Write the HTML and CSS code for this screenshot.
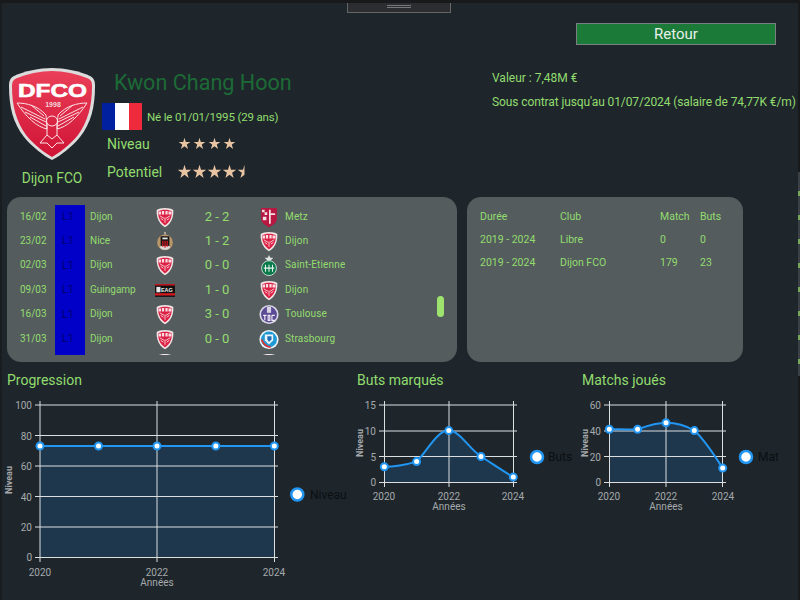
FILE: index.html
```html
<!DOCTYPE HTML>
<html lang="fr">
<head>
	<meta charset="UTF-8">
	<title>Kwon Chang Hoon</title>
	<link rel="stylesheet" href="styles.css">
</head>
<body>
	<!-- Shared crests and stars -->
	<svg class="sprites" aria-hidden="true">
		<symbol id="star" viewBox="0 0 20 20">
			<polygon points="10,1 12,7.5 19,7.5 13.5,11.5 15.5,18.5 10,14.2 4.5,18.5 6.5,11.5 1,7.5 8,7.5" />
		</symbol>
		<symbol id="star-half" viewBox="0 0 20 20">
			<polygon points="10,1 8,7.5 1,7.5 6.5,11.5 4.5,18.5 10,14.2" />
		</symbol>
		<symbol id="dijon" viewBox="0 0 22 24">
			<path fill="#f2e6e8" d="M11 1 C7 1 3 2 1.5 3.5 C1 9 2.5 15 6 19 C8 21 10 22.5 11 23 C12 22.5 14 21 16 19 C19.5 15 21 9 20.5 3.5 C19 2 15 1 11 1 Z" />
			<path fill="#dc2044" d="M11 3 C8 3 4.5 3.6 3 5 C3 10 4.5 14.5 7 17.5 C8.5 19.2 10 20.5 11 21 C12 20.5 13.5 19.2 15 17.5 C17.5 14.5 19 10 19 5 C17.5 3.6 14 3 11 3 Z" />
			<path fill="#fbdfe4" d="M3.5 5 H6.5 V8.5 H3.5 Z M7.5 4.5 H10 V8.5 H7.5 Z M11.5 4.5 H14 V8.5 H11.5 Z M15 5 H18.5 V8.5 H15 Z" />
			<path fill="none" stroke="#fbdfe4" stroke-width="1" d="M5 10 L10 13 M17 10 L12 13 M11 12 V18 M6 13 L9 15 M16 13 L13 15" />
		</symbol>
		<symbol id="nice" viewBox="0 0 22 24">
			<circle cx="11" cy="13" r="9" fill="#b9956a" />
			<path fill="#d8dcdc" d="M5 19 Q11 24 17 19 L15 16 H7 Z" />
			<rect x="10" y="1" width="2" height="3" fill="#b9b2a4" />
			<rect x="6" y="6" width="10" height="11" fill="#151515" />
			<path stroke="#d71920" stroke-width="1.4" d="M8.5 11 V18 M11 11 V19 M13.5 11 V18" />
			<rect x="8" y="7.5" width="6" height="2" fill="#e8e8e8" />
		</symbol>
		<symbol id="metz" viewBox="0 0 22 24">
			<path fill="#b71740" d="M2 1 H20 V13 C20 18 15 21 11 23 C7 21 2 18 2 13 Z" />
			<path fill="#f3dfe4" d="M11 3 H13 V7 H18 V9 H13 V19 H11 Z M3 3 H6 V6 H3 Z M6 6 H9 V9 H6 Z M4 11 H8 V15 H4 Z" />
		</symbol>
		<symbol id="saint-etienne" viewBox="0 0 22 24">
			<polygon fill="#dfe6e4" points="11,0 12.5,3 16,3 13,6 11,8 9,6 6,3 9.5,3" />
			<circle cx="11" cy="15" r="8.5" fill="#0a7a4a" />
			<circle cx="11" cy="15" r="8.5" fill="none" stroke="#d8e4de" stroke-width="1" />
			<path stroke="#e8f2ec" stroke-width="1.2" d="M7 11 V19 M11 11 V19 M15 11 V19 M5 15 H17" />
		</symbol>
		<symbol id="toulouse" viewBox="0 0 24 24">
			<circle cx="12" cy="12" r="11.5" fill="#d9d6e6" />
			<circle cx="12" cy="12" r="9.5" fill="#5b4a94" />
			<rect x="9.5" y="3" width="5" height="7" fill="#d8d4e6" />
			<path stroke="#f0eef6" stroke-width="1.4" fill="none" d="M5 13 H9 M7 13 V19 M11 13 V19 H13 V13 Z M15.5 13 H19 M15.5 13 V19 H19" />
		</symbol>
		<symbol id="strasbourg" viewBox="0 0 24 24">
			<circle cx="12" cy="12" r="11.5" fill="#eef5fa" />
			<circle cx="12" cy="12" r="9.5" fill="#1f9ad6" />
			<path fill="#eef5fa" d="M7 6 H17 V13 L12 18 L7 13 Z" />
			<path stroke="#e2322f" stroke-width="2.2" fill="none" d="M3 12 C5 17 9 21 14 21" />
			<path fill="#1c6fb5" d="M10 8 H15 V12 L12 15 L10 12 Z" />
		</symbol>
	</svg>

	<div class="window">
		<div class="grip"><span></span></div>
		<div class="edge"><div class="edge-ticks"></div></div>

		<header class="head">
			<div class="club">
				<svg class="crest" viewBox="0 0 100 110" role="img" aria-label="Dijon FCO">
					<defs>
						<linearGradient id="crest-red" x1="0" y1="0" x2="0" y2="1">
							<stop offset="0" stop-color="#ea3f58" />
							<stop offset="1" stop-color="#d01336" />
						</linearGradient>
					</defs>
					<path fill="#dcdcdc" d="M52 9 C40 9 24 12 14 17 C10 19 9 22 9 27 C9 48 13 64 24 78 C32 88 44 97 52 101 C60 97 72 88 80 78 C91 64 95 48 95 27 C95 22 94 19 90 17 C80 12 64 9 52 9 Z" />
					<path fill="url(#crest-red)" d="M52 12 C41 12 26 15 16 19.5 C13 21 12 23 12 27 C12 47 16 62 26 76 C34 86 45 94 52 98 C59 94 70 86 78 76 C88 62 92 47 92 27 C92 23 91 21 88 19.5 C78 15 63 12 52 12 Z" />
					<text class="crest-name" x="18" y="37.5" textLength="69" lengthAdjust="spacingAndGlyphs">DFCO</text>
					<text class="crest-year" x="53" y="47.5">1998</text>
					<g class="crest-owl">
						<path d="M17 44 C27 44 38 47 46 56 L47 70 C37 68 26 58 17 44 Z" />
						<path d="M21 48 L45 60 M25 53 L46 63 M30 58 L46 67 M31 46 L44 57" />
						<path d="M87 44 C77 44 66 47 58 56 L57 70 C67 68 78 58 87 44 Z" />
						<path d="M83 48 L59 60 M79 53 L58 63 M74 58 L58 67 M73 46 L60 57" />
						<ellipse cx="52" cy="62" rx="5.5" ry="5" />
						<path d="M47 65 L47 76 L52 80 L57 76 L57 65" />
						<path d="M47 76 L40 84 L47 84 L52 89 L57 84 L64 84 L57 76" />
					</g>
				</svg>
				<p class="club-name">Dijon FCO</p>
			</div>

			<div class="identity">
				<h1 class="player-name">Kwon Chang Hoon</h1>
				<div class="birth">
					<div class="flag"><span class="flag-blue"></span><span class="flag-white"></span><span class="flag-red"></span></div>
					<span>Né le 01/01/1995 (29 ans)</span>
				</div>
				<div class="rating">
					<span class="rating-label">Niveau</span>
					<div class="stars">
						<svg class="star"><use href="#star" /></svg>
						<svg class="star"><use href="#star" /></svg>
						<svg class="star"><use href="#star" /></svg>
						<svg class="star"><use href="#star" /></svg>
					</div>
				</div>
				<div class="rating rating-big">
					<span class="rating-label">Potentiel</span>
					<div class="stars">
						<svg class="star"><use href="#star" /></svg>
						<svg class="star"><use href="#star" /></svg>
						<svg class="star"><use href="#star" /></svg>
						<svg class="star"><use href="#star" /></svg>
						<svg class="star"><use href="#star-half" /></svg>
					</div>
				</div>
			</div>

			<div class="facts">
				<a class="back" href="#">Retour</a>
				<p class="fact">Valeur : 7,48M €</p>
				<p class="fact fact-long">Sous contrat jusqu'au 01/07/2024 (salaire de 74,77K €/m)</p>
			</div>
		</header>

		<section class="panels">
			<div class="panel panel-matches">
				<div class="matches">
					<div class="match">
						<span>16/02</span><span class="league">L1</span><span class="team">Dijon</span>
						<svg class="logo"><use href="#dijon" /></svg>
						<span class="score">2 - 2</span>
						<svg class="logo"><use href="#metz" /></svg>
						<span class="team-away">Metz</span>
					</div>
					<div class="match">
						<span>23/02</span><span class="league">L1</span><span class="team">Nice</span>
						<svg class="logo"><use href="#nice" /></svg>
						<span class="score">1 - 2</span>
						<svg class="logo"><use href="#dijon" /></svg>
						<span class="team-away">Dijon</span>
					</div>
					<div class="match">
						<span>02/03</span><span class="league">L1</span><span class="team">Dijon</span>
						<svg class="logo"><use href="#dijon" /></svg>
						<span class="score">0 - 0</span>
						<svg class="logo"><use href="#saint-etienne" /></svg>
						<span class="team-away">Saint-Etienne</span>
					</div>
					<div class="match">
						<span>09/03</span><span class="league">L1</span><span class="team">Guingamp</span>
						<svg class="logo" viewBox="0 0 22 14">
							<rect width="22" height="14" fill="#111" />
							<rect y="10" width="22" height="2.5" fill="#d71920" />
							<rect width="22" height="1.5" fill="#d71920" />
							<rect x="1.5" y="3" width="4.5" height="6" fill="#e6e6e6" />
							<text class="logo-text" x="6.5" y="9">EAG</text>
						</svg>
						<span class="score">1 - 0</span>
						<svg class="logo"><use href="#dijon" /></svg>
						<span class="team-away">Dijon</span>
					</div>
					<div class="match">
						<span>16/03</span><span class="league">L1</span><span class="team">Dijon</span>
						<svg class="logo"><use href="#dijon" /></svg>
						<span class="score">3 - 0</span>
						<svg class="logo"><use href="#toulouse" /></svg>
						<span class="team-away">Toulouse</span>
					</div>
					<div class="match">
						<span>31/03</span><span class="league">L1</span><span class="team">Dijon</span>
						<svg class="logo"><use href="#dijon" /></svg>
						<span class="score">0 - 0</span>
						<svg class="logo"><use href="#strasbourg" /></svg>
						<span class="team-away">Strasbourg</span>
					</div>
					<div class="match">
						<span></span><span class="league"></span><span class="team"></span>
						<svg class="logo"><use href="#dijon" /></svg>
						<span class="score"></span>
						<svg class="logo"><use href="#dijon" /></svg>
						<span class="team-away"></span>
					</div>
				</div>
				<div class="scroll-thumb"></div>
			</div>

			<div class="panel panel-career">
				<div class="career">
					<span>Durée</span><span>Club</span><span>Match</span><span>Buts</span>
					<span>2019 - 2024</span><span>Libre</span><span>0</span><span>0</span>
					<span>2019 - 2024</span><span>Dijon FCO</span><span>179</span><span>23</span>
				</div>
			</div>
		</section>

		<section class="charts">
			<div class="chart chart-level">
				<h2>Progression</h2>
				<svg viewBox="2 395 348 205" width="348" height="205">
					<path class="area" d="M40 446 H274.3 V557.3 H40 Z" />
					<path class="grid" d="M35 405 H278 M35 435.5 H278 M35 466 H278 M35 496.5 H278 M35 527 H278 M35 557.5 H278 M40 401 V562 M157 401 V562 M274.5 401 V562" />
					<path class="line" d="M40 446 H274.3" />
					<g class="dots">
						<circle cx="40" cy="446" r="3.5" /><circle cx="98.5" cy="446" r="3.5" /><circle cx="157" cy="446" r="3.5" /><circle cx="215.8" cy="446" r="3.5" /><circle cx="274.3" cy="446" r="3.5" />
					</g>
					<g class="ticks-y">
						<text x="32" y="409">100</text><text x="32" y="439.5">80</text><text x="32" y="470">60</text><text x="32" y="500.5">40</text><text x="32" y="531">20</text><text x="32" y="561">0</text>
					</g>
					<g class="ticks-x">
						<text x="40" y="576">2020</text><text x="157" y="576">2022</text><text x="274" y="576">2024</text>
					</g>
					<text class="axis-x" x="157" y="586">Années</text>
					<text class="axis-y" transform="translate(12 480) rotate(-90)">Niveau</text>
					<circle class="legend-dot" cx="297.3" cy="494.5" r="6" />
					<text class="legend" x="310" y="499">Niveau</text>
				</svg>
			</div>

			<div class="chart chart-goals">
				<h2>Buts marqués</h2>
				<svg viewBox="350 395 225 125" width="225" height="125">
					<path class="area" d="M384.3 466.8 C395 466.8 405 465 416.6 461.6 C428 450 437 430.6 448.8 430.6 C460 430.6 469 449 481 456.5 C492 463.5 503 471 513.3 477.1 V482.3 H384.3 Z" />
					<path class="grid" d="M379 405 H517 M379 431 H517 M379 456.5 H517 M379 482.5 H517 M384.5 401 V487 M449 401 V487 M513.5 401 V487" />
					<path class="line" d="M384.3 466.8 C395 466.8 405 465 416.6 461.6 C428 450 437 430.6 448.8 430.6 C460 430.6 469 449 481 456.5 C492 463.5 503 471 513.3 477.1" />
					<g class="dots">
						<circle cx="384.3" cy="466.8" r="3.5" /><circle cx="416.6" cy="461.6" r="3.5" /><circle cx="448.8" cy="430.6" r="3.5" /><circle cx="481" cy="456.5" r="3.5" /><circle cx="513.3" cy="477.1" r="3.5" />
					</g>
					<g class="ticks-y">
						<text x="376" y="409">15</text><text x="376" y="434.5">10</text><text x="376" y="460.5">5</text><text x="376" y="486">0</text>
					</g>
					<g class="ticks-x">
						<text x="384" y="500">2020</text><text x="449" y="500">2022</text><text x="513" y="500">2024</text>
					</g>
					<text class="axis-x" x="449" y="510">Années</text>
					<text class="axis-y" transform="translate(363 443) rotate(-90)">Niveau</text>
					<circle class="legend-dot" cx="537" cy="457" r="6" />
					<text class="legend" x="548" y="461">Buts</text>
				</svg>
			</div>

			<div class="chart chart-games">
				<h2>Matchs joués</h2>
				<svg viewBox="575 395 203 125" width="203" height="125">
					<path class="area" d="M609.3 429.3 C619 429.3 628 429.6 637.6 429.3 C647 426 656 422.8 666 422.8 C676 422.8 685 425 694.3 430.6 C705 440 714 455 722.7 468.1 V482.3 H609.3 Z" />
					<path class="grid" d="M604 405 H726 M604 431 H726 M604 456.5 H726 M604 482.5 H726 M609.5 401 V487 M666 401 V487 M722.5 401 V487" />
					<path class="line" d="M609.3 429.3 C619 429.3 628 429.6 637.6 429.3 C647 426 656 422.8 666 422.8 C676 422.8 685 425 694.3 430.6 C705 440 714 455 722.7 468.1" />
					<g class="dots">
						<circle cx="609.3" cy="429.3" r="3.5" /><circle cx="637.6" cy="429.3" r="3.5" /><circle cx="666" cy="422.8" r="3.5" /><circle cx="694.3" cy="430.6" r="3.5" /><circle cx="722.7" cy="468.1" r="3.5" />
					</g>
					<g class="ticks-y">
						<text x="601" y="409">60</text><text x="601" y="434.5">40</text><text x="601" y="460.5">20</text><text x="601" y="486">0</text>
					</g>
					<g class="ticks-x">
						<text x="609" y="500">2020</text><text x="666" y="500">2022</text><text x="723" y="500">2024</text>
					</g>
					<text class="axis-x" x="666" y="510">Années</text>
					<text class="axis-y" transform="translate(588 443) rotate(-90)">Niveau</text>
					<circle class="legend-dot" cx="746" cy="457" r="6" />
					<text class="legend" x="758" y="461">Matchs</text>
				</svg>
			</div>
		</section>
	</div>
</body>
</html>
```

FILE: styles.css
```css
body, html {
	margin: 0;
	padding: 0;
	background: #1e262c;
	font-family: Roboto, "Liberation Sans", sans-serif;
	color: #92dc6e;
}

p, h1, h2 {
	margin: 0;
	font-weight: normal;
}

.sprites {
	position: absolute;
	width: 0;
	height: 0;
}

.window {
	position: relative;
	box-sizing: border-box;
	width: 800px;
	height: 600px;
	overflow: hidden;
	background: #1e262c;
	border-top: 3px solid #17191b;
	border-left: 2px solid #1a1d20;
}

.grip {
	position: absolute;
	top: -3px;
	left: 345px;
	box-sizing: border-box;
	width: 104px;
	height: 13px;
	background: #2b2d30;
	border: 1px solid #666;
	display: flex;
	align-items: center;
	justify-content: center;
}

.grip span {
	display: block;
	width: 24px;
	height: 1px;
	border-top: 1px solid #777;
	border-bottom: 1px solid #777;
}

.edge {
	position: absolute;
	top: 0;
	bottom: 0;
	right: 0;
	width: 2px;
	background: #17191b;
}

.edge-ticks {
	margin-top: 169px;
	height: 204px;
	background: repeating-linear-gradient(to bottom, #3a4044 0, #3a4044 19px, #76a85c 19px, #76a85c 24px);
}

/* Header */

.head {
	display: flex;
	height: 194px;
}

.club {
	width: 98px;
	padding-top: 56px;
	box-sizing: border-box;
	text-align: center;
}

.crest {
	display: block;
	width: 100px;
	height: 110px;
	margin-left: -2px;
}

.crest-name {
	font: bold 19px "Liberation Sans", sans-serif;
	fill: #fff;
	stroke: #fff;
	stroke-width: .6;
}

.crest-year {
	font: bold 7px "Liberation Sans", sans-serif;
	fill: #f6d4da;
	text-anchor: middle;
}

.crest-owl path, .crest-owl ellipse {
	fill: none;
	stroke: #fbe3e7;
	stroke-width: 1;
}

.logo-text {
	font: bold 6px "Liberation Sans", sans-serif;
	fill: #eee;
}

.club-name {
	margin-top: 1px;
	margin-left: 2px;
	font-size: 13.8px;
}

.identity {
	width: 392px;
	padding-top: 67px;
	box-sizing: border-box;
}

.player-name {
	margin-left: 14px;
	font-size: 21.6px;
	line-height: 26px;
	color: #1c6a35;
}

.birth {
	display: flex;
	align-items: center;
	gap: 5px;
	margin: 7px 0 0 2px;
	font-size: 11.5px;
	letter-spacing: -.15px;
}

.flag {
	display: flex;
	width: 40px;
	height: 27px;
}

.flag span {
	flex: 1;
}

.flag-blue {
	background: #00209f;
}

.flag-white {
	background: #fff;
}

.flag-red {
	background: #ee2a3c;
}

.rating {
	display: flex;
	align-items: center;
	margin: 1px 0 0 7px;
	height: 25px;
	font-size: 14px;
}

.rating-label {
	width: 71px;
}

.stars {
	display: flex;
	gap: 2px;
}

.star {
	width: 13px;
	height: 13px;
	fill: #e8c4a2;
}

.rating-big {
	margin-top: 3px;
}

.rating-big .stars {
	gap: 0;
	margin-left: -1px;
}

.rating-big .star {
	width: 15px;
	height: 15px;
}

.facts {
	flex: 1;
	min-width: 0;
	padding-top: 20px;
	white-space: nowrap;
	font-size: 12px;
}

.back {
	display: block;
	box-sizing: border-box;
	width: 200px;
	height: 22px;
	margin: 0 0 21px 84px;
	background: #1c7a38;
	border: 1px solid #7a7f82;
	color: #e8f0ea;
	font-size: 15px;
	line-height: 20px;
	text-align: center;
	text-decoration: none;
}

.fact {
	height: 24px;
	line-height: 24px;
}

.fact-long {
	letter-spacing: -.1px;
}

/* Panels */

.panels {
	display: flex;
	gap: 10px;
	padding-left: 5px;
}

.panel {
	position: relative;
	box-sizing: border-box;
	height: 165px;
	background: #555c5e;
	border-radius: 14px;
}

.panel-matches {
	width: 450px;
	padding: 8px 0 0 13px;
}

.matches {
	width: 325px;
	height: 150px;
	overflow: hidden;
	font-size: 10px;
}

.match {
	display: grid;
	grid-template-columns: 35px 30px 64px 32px 72px 32px 60px;
	height: 24.4px;
	align-items: center;
	white-space: nowrap;
}

.match > span {
	padding-bottom: 2px;
}

.match .league {
	align-self: stretch;
	padding: 0 0 0 7px;
	background: #0000c8;
	color: #00003c;
	font-size: 11px;
	font-weight: 300;
	line-height: 24px;
}

.team {
	padding-left: 5px;
}

.score {
	font-size: 13px;
	text-align: center;
}

.team-away {
	overflow: hidden;
	letter-spacing: .15px;
}

.logo {
	justify-self: center;
	width: 20px;
	height: 21px;
}

.scroll-thumb {
	position: absolute;
	top: 99px;
	left: 430px;
	width: 7px;
	height: 21px;
	background: #9de36e;
	border-radius: 4px;
}

.panel-career {
	width: 276px;
	padding: 8px 0 0 13px;
}

.career {
	display: grid;
	grid-template-columns: 80px 100px 40px 40px;
	grid-auto-rows: 23px;
	align-items: center;
	font-size: 10.5px;
}

/* Charts */

.charts {
	display: flex;
	margin-top: 8px;
}

.chart h2 {
	height: 25px;
	font-size: 14px;
	line-height: 20px;
}

.chart svg {
	display: block;
}

.chart-level {
	width: 348px;
}

.chart-level h2 {
	padding-left: 5px;
}

.chart-goals {
	width: 225px;
}

.chart-goals h2 {
	padding-left: 7px;
}

.chart-games {
	width: 203px;
}

.chart-games h2 {
	padding-left: 7px;
}

.area {
	fill: #1f374c;
}

.grid {
	fill: none;
	stroke: #dcdfe0;
	stroke-width: 1;
}

.line {
	fill: none;
	stroke: #2196f3;
	stroke-width: 2;
}

.dots circle {
	fill: #fff;
	stroke: #2196f3;
	stroke-width: 2;
}

.ticks-y text, .ticks-x text, .axis-x, .axis-y {
	fill: #a6a9ab;
	font-size: 10px;
}

.ticks-y text {
	text-anchor: end;
}

.ticks-x text, .axis-x, .axis-y {
	text-anchor: middle;
}

.axis-y {
	font-size: 9px;
	font-weight: bold;
}

.legend-dot {
	fill: #fff;
	stroke: #2196f3;
	stroke-width: 2.5;
}

.legend {
	fill: #0c0f11;
	font-size: 12px;
}
```
